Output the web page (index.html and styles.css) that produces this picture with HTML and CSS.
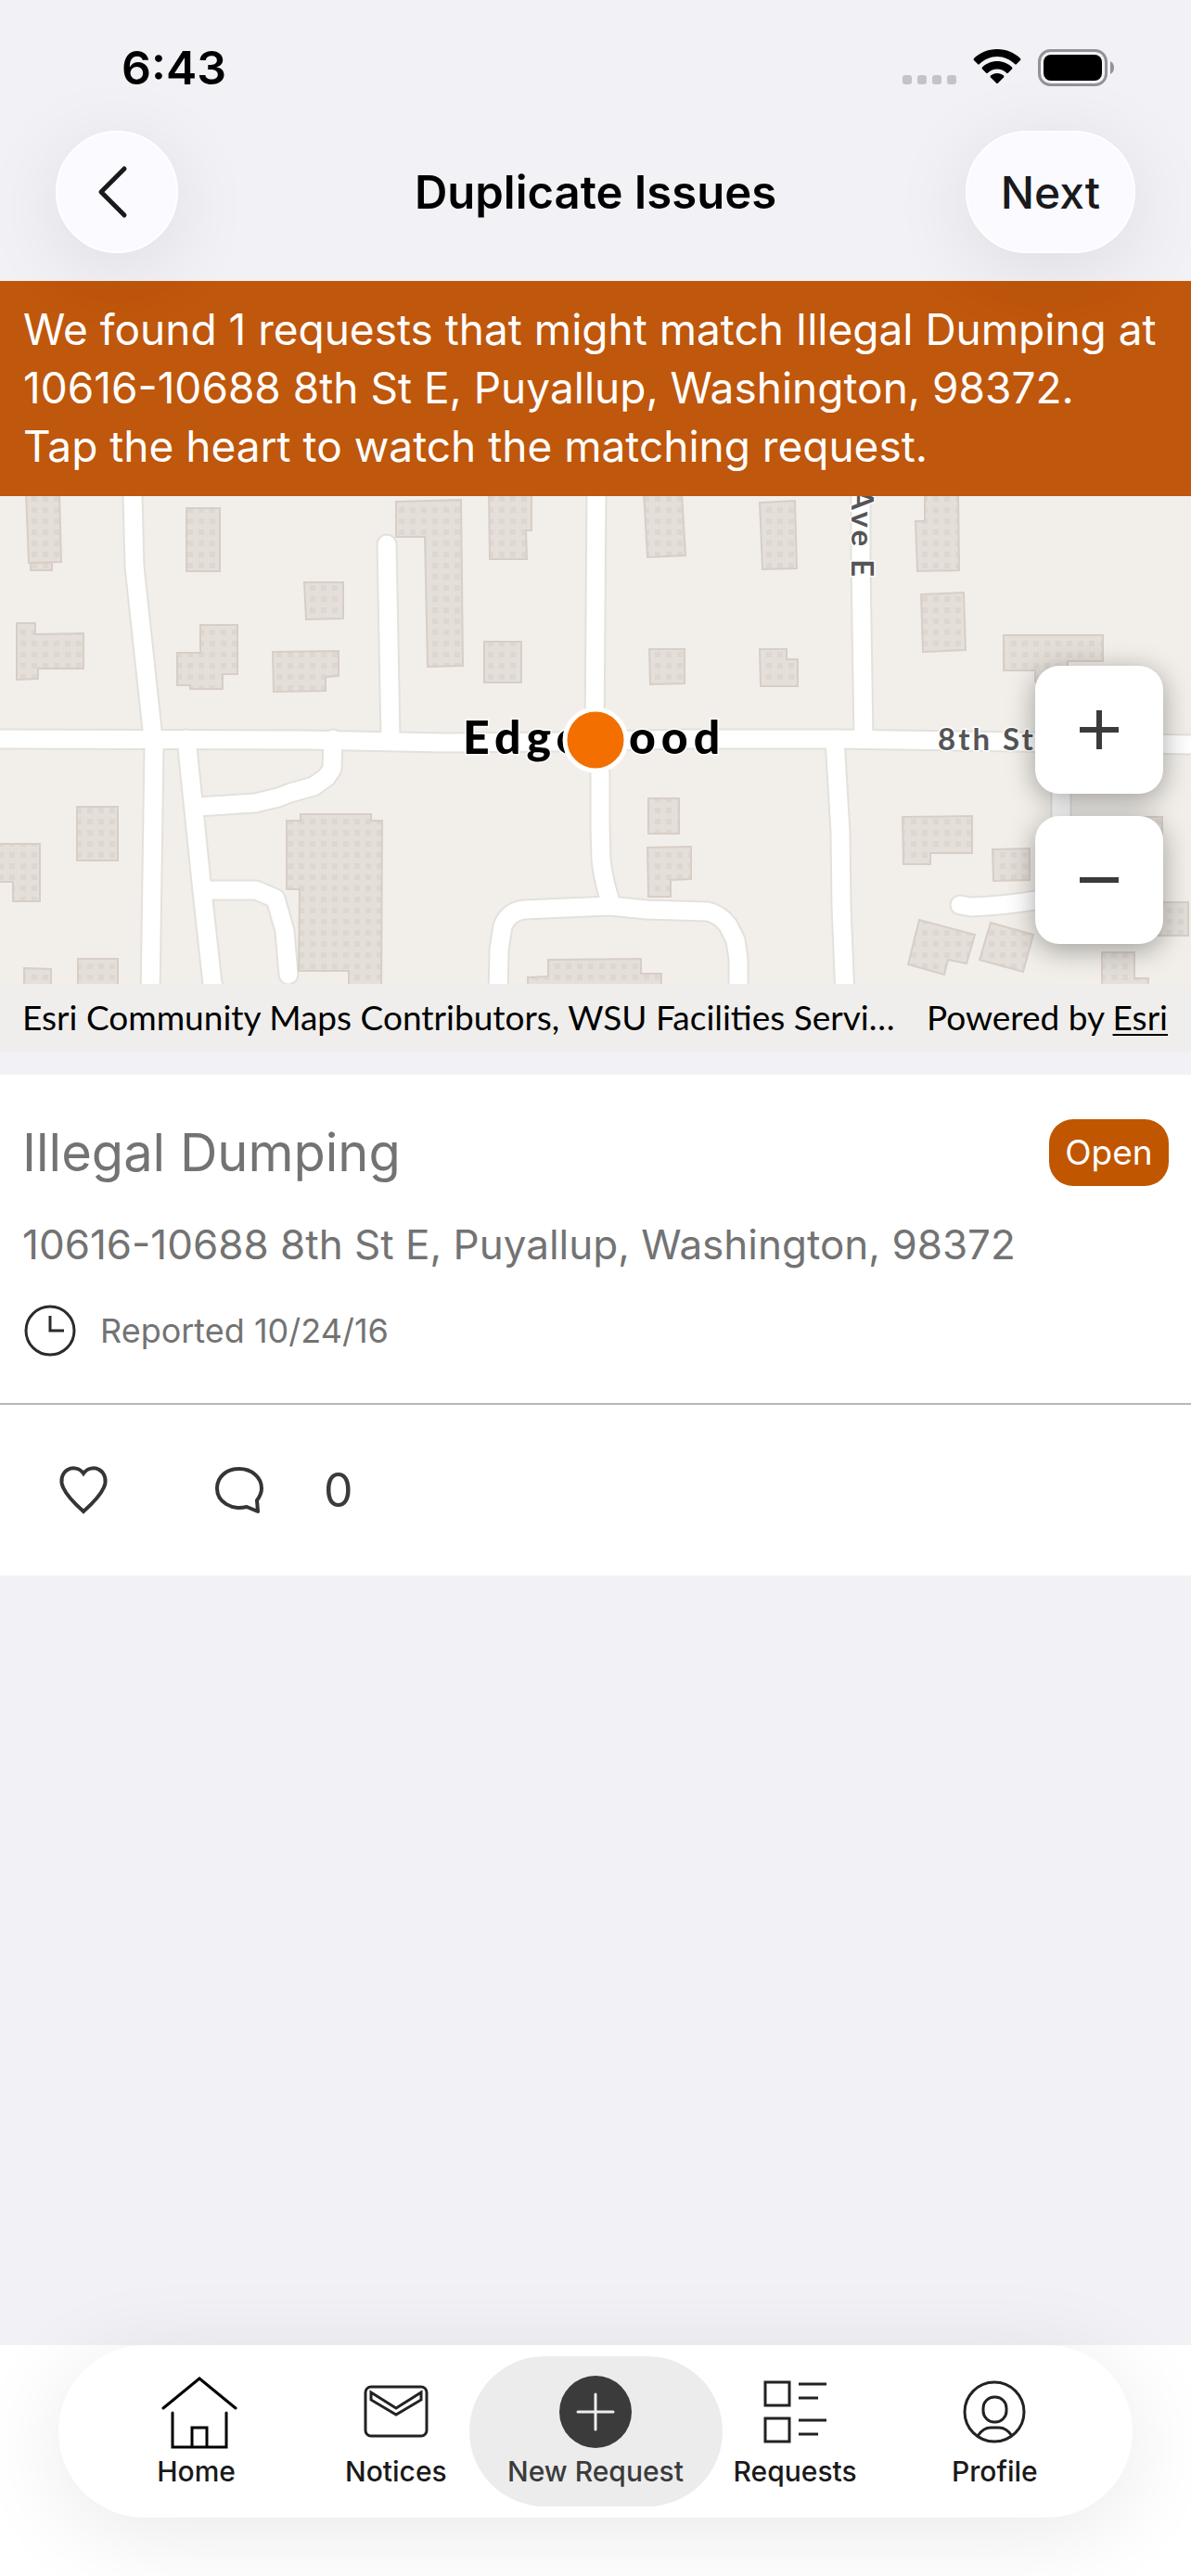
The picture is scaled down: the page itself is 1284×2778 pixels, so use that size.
FILE: index.html
```html
<!DOCTYPE html>
<html lang="en">
<head>
<meta charset="utf-8">
<meta name="viewport" content="width=device-width, initial-scale=1">
<title>Duplicate Issues</title>
<link rel="stylesheet" href="styles.css">
</head>
<body>
<div class="status">
  <span class="status-time">6:43</span>
  <div class="status-icons">
    <svg width="58" height="38" viewBox="0 0 58 38" fill="#c4c3c8" aria-hidden="true">
      <rect x="0" y="28" width="10" height="10" rx="3"/><rect x="16" y="28" width="10" height="10" rx="3"/><rect x="32" y="28" width="10" height="10" rx="3"/><rect x="48" y="28" width="10" height="10" rx="3"/>
    </svg>
    <svg width="52" height="38" viewBox="0 0 52 38" aria-hidden="true">
      <path d="M26 0C36 0 45 4 51 10Q52 11 51 12L47 16Q46 17 45 16C40 11 33 8 26 8S12 11 7 16Q6 17 5 16L1 12Q0 11 1 10C7 4 16 0 26 0Z"/>
      <path d="M26 13C32 13 38 15.500 42 19.500Q43 20.500 42 21.500L38 25.500Q37 26.500 36 25.500C33 23 30 21.500 26 21.500S19 23 16 25.500Q15 26.500 14 25.500L10 21.500Q9 20.500 10 19.500C14 15.500 20 13 26 13Z"/>
      <path d="M26 26C29 26 31 27 33 28.500Q34 29.500 33 30.500L27 36.500Q26 37.500 25 36.500L19 30.500Q18 29.500 19 28.500C21 27 23 26 26 26Z"/>
    </svg>
    <svg width="83" height="40" viewBox="0 0 83 40" aria-hidden="true">
      <rect x="1.500" y="1.500" width="72" height="37" rx="12" fill="none" stroke="#939297" stroke-width="3"/>
      <rect x="6" y="6" width="63" height="28" rx="8"/>
      <path d="M78 13Q82 15 82 20T78 27Z" fill="#939297"/>
    </svg>
  </div>
</div>
<header class="nav">
  <button class="glass back" type="button" aria-label="Back">
    <svg width="34" height="56" viewBox="0 0 34 56" fill="none" stroke="#1a1a1c" stroke-width="5" stroke-linecap="round" stroke-linejoin="round"><path d="M29 3L4 28L29 53"/></svg>
  </button>
  <h1 class="nav-title">Duplicate Issues</h1>
  <button class="glass next" type="button">Next</button>
</header>
<main>
  <p class="banner">We found 1 requests that might match Illegal Dumping at<br>10616-10688 8th St E, Puyallup, Washington, 98372.<br>Tap the heart to watch the matching request.</p>
  <section class="map" aria-label="Map">
    <svg class="map-canvas" viewBox="0 0 1284 526" preserveAspectRatio="xMidYMid slice">
      <defs>
        <pattern id="dots" x="10" y="0" width="12" height="12" patternUnits="userSpaceOnUse">
          <rect width="12" height="12" fill="#e4dfd9"/><rect width="6" height="6" fill="#dcd7d1"/>
        </pattern>
        <g id="roads">
          <path d="M0 262L330 263L430 265L480 266L600 265L740 262L900 262L1030 264L1284 268"/>
          <path d="M143 -10V0L145 76L164 252L166 272L162 540"/>
          <path d="M201 262L209 339L218 426L229 526L238 546"/>
          <path d="M213 335L275 331L300 325L313 320L338 313L352 303L358 294L359 262"/>
          <path d="M220 425H276L297 434L307 469L311 516"/>
          <path d="M417 52L421 262"/>
          <path d="M643 -10L641 262L647 300V355L648 392Q650 412 657 434"/>
          <path d="M537 540L538 489L542 464Q548 448 565 446L657 442L697 446L763 448Q776 451 785 463L793 479L796 499V540"/>
          <path d="M928 -10V74L931 262"/>
          <path d="M900 262L906 363L907 442L911 540"/>
          <path d="M1144 268V434L1116 436Q1080 442 1047 443L1035 441"/>
        </g>
      </defs>
      <rect width="1284" height="526" fill="#f2efea"/>
      <g fill="none" stroke-linecap="round" stroke-linejoin="round">
        <use href="#roads" stroke="#e3e1db" stroke-width="23"/>
        <use href="#roads" stroke="#fff" stroke-width="19"/>
      </g>
      <g fill="url(#dots)" stroke="#d8cec6" stroke-width="2">
        <path d="M28 -4H64L66 71L31 72ZM33 72H56V80H33Z"/>
        <path d="M201 13H237V81H201Z"/>
        <path d="M328 93H370V132L330 133Z"/>
        <path d="M18 137H38V149L90 148V186H41V197L18 198Z"/>
        <path d="M216 139H256V192H240V208H205V204H191V169H216Z"/>
        <path d="M294 168L365 167V194L351 195V210L295 211Z"/>
        <path d="M83 335H127V393H83Z"/>
        <path d="M-4 375H43V437H14V416H-4Z"/>
        <path d="M26 509L55 510V540H26ZM84 499H127V540H84Z"/>
        <path d="M324 343H400V350H412L411 540H376V512H322L323 424H309V350H324Z"/>
        <path d="M427 6L497 4L499 183L461 184L458 44H427Z"/>
        <path d="M527 -4H573V37H567L568 68H528Z"/>
        <path d="M694 -4H735L739 64L698 66Z"/>
        <path d="M819 7L857 5L859 78L822 79Z"/>
        <path d="M522 157H562V201H522Z"/>
        <path d="M700 165H738V202L701 203Z"/>
        <path d="M819 165H848V176H860V205H820Z"/>
        <path d="M699 326H732V364H699Z"/>
        <path d="M698 379L745 378V413L723 414V432H699Z"/>
        <path d="M569 540V519L591 518V500L691 499V515H713V540Z"/>
        <path d="M997 -4H1033L1034 80L989 81L987 27H997Z"/>
        <path d="M993 106L1039 104L1041 166L995 168Z"/>
        <path d="M1082 150H1189V178H1151V200H1116V188H1082Z"/>
        <path d="M973 346L1048 345V385H1003V397H974Z"/>
        <path d="M1070 381L1110 380V414L1071 415Z"/>
        <path d="M991 457L1051 473L1042 504L1022 500L1018 516L979 505Z"/>
        <path d="M1068 460L1114 473L1103 513L1056 500Z"/>
        <path d="M1210 346H1253V370H1210ZM1245 438H1281V474H1245Z"/>
        <path d="M1188 492H1223V520H1238V540H1188Z"/>
      </g>
      <text class="place" x="499" y="278">Edgewood</text>
      <text class="street" x="1011" y="274">8th St E</text>
      <text class="street" text-anchor="end" transform="translate(918 90) rotate(90)">Ave E</text>
      <circle cx="642" cy="263" r="33" fill="#f26f00" stroke="#fff" stroke-width="5"/>
    </svg>
    <div class="zoom">
      <button class="zoom-btn" type="button" aria-label="Zoom in"><svg width="42" height="42" viewBox="0 0 42 42" fill="#3b3b3b"><path d="M0 18H18V0H24V18H42V24H24V42H18V24H0Z"/></svg></button>
      <button class="zoom-btn" type="button" aria-label="Zoom out"><svg width="42" height="42" viewBox="0 0 42 42" fill="#3b3b3b"><path d="M0 18H42V24H0Z"/></svg></button>
    </div>
    <div class="credits"><span>Esri Community Maps Contributors, WSU Facilities Servi…</span><span>Powered by <a href="#esri">Esri</a></span></div>
  </section>
  <article class="card">
    <div class="card-body">
      <div class="card-head"><h2 class="card-title">Illegal Dumping</h2><span class="badge">Open</span></div>
      <p class="address">10616-10688 8th St E, Puyallup, Washington, 98372</p>
      <p class="reported">
        <svg width="56" height="56" viewBox="0 0 56 56" fill="none" stroke="#2b2b2b" stroke-width="3" aria-hidden="true"><circle cx="28" cy="28" r="26"/><path d="M28 12V28H43"/></svg>
        <span>Reported 10/24/16</span>
      </p>
    </div>
    <div class="actions">
      <button class="action" type="button" aria-label="Watch"><svg width="54" height="54" viewBox="0 0 54 54" fill="none" stroke="#353535" stroke-width="4"><path d="M27 9C31 3 39 2 44 5C51 9 52 18 49 24C45 33 36 42 27 50C18 42 9 33 5 24C2 18 3 9 10 5C15 2 23 3 27 9Z"/></svg></button>
      <button class="action" type="button"><svg width="54" height="54" viewBox="0 0 54 54" fill="none" stroke="#353535" stroke-width="4" stroke-linejoin="round" aria-hidden="true"><path d="M46 38L47 50L35 45C19 49 3 40 3 25C3 12 14 4 27 4S51 13 51 25C51 30 49 34 46 38Z"/></svg><span>0</span></button>
    </div>
  </article>
</main>
<footer class="dock">
  <nav class="tabs" aria-label="Main">
    <a class="tab" href="#home"><svg width="82" height="80" viewBox="0 0 82 80" fill="none" stroke="#000" stroke-width="3" stroke-linecap="round" aria-hidden="true"><path d="M5 36L44 4L83 36M15 41V78H73V41M36 78V57H52V78"/></svg><span>Home</span></a>
    <a class="tab" href="#notices"><svg width="82" height="80" viewBox="0 0 82 80" fill="none" stroke="#222" stroke-width="3" aria-hidden="true"><rect x="8" y="13" width="66" height="53" rx="6"/><path d="M14 19L41 36L68 19V27L41 43L14 27Z"/></svg><span>Notices</span></a>
    <a class="tab tab-on" href="#new" aria-current="page"><svg width="82" height="80" viewBox="0 0 82 80" aria-hidden="true"><circle cx="41" cy="40" r="39" fill="#3b3b3b"/><path d="M41 21V59M22 40H60" stroke="#eee" stroke-width="3" stroke-linecap="round"/></svg><span>New Request</span></a>
    <a class="tab" href="#requests"><svg width="82" height="80" viewBox="0 0 82 80" fill="none" stroke="#222" stroke-width="3" aria-hidden="true"><path d="M9 8H35V33H9ZM9 47H35V72H9ZM45 10H75M45 25H66M45 49H75M45 64H66"/></svg><span>Requests</span></a>
    <a class="tab" href="#profile"><svg width="82" height="80" viewBox="0 0 82 80" fill="none" stroke="#222" stroke-width="3" aria-hidden="true"><circle cx="41" cy="40" r="32"/><rect x="29" y="24" width="25" height="27" rx="12"/><path d="M23 66Q29 57 37 57H46Q54 57 60 66"/></svg><span>Profile</span></a>
  </nav>
</footer>
</body>
</html>
```
FILE: styles.css
```css
* { box-sizing: border-box; }

body {
  margin: 0;
  min-height: 100vh;
  display: flex;
  flex-direction: column;
  background: #f2f1f6;
  color: #000;
  font-family: Inter, "Liberation Sans", sans-serif;
}

h1, h2, p { margin: 0; font-weight: 400; }
button { border: 0; padding: 0; background: none; color: inherit; font: inherit; }
svg { display: block; flex: none; overflow: visible; }

.status {
  height: 141px;
  padding: 0 82px 0 131px;
  display: flex;
  justify-content: space-between;
}
.status-time { padding-top: 43px; font-size: 50px; line-height: 60px; font-weight: 600; }
.status-icons { display: flex; align-items: flex-start; gap: 18px; padding-top: 53px; }

.nav {
  position: relative;
  z-index: 1;
  display: grid;
  grid-template-columns: 1fr auto 1fr;
  align-items: center;
  height: 162px;
  padding: 0 60px 30px;
}
.nav-title { padding-top: 2px; font-size: 49px; line-height: 60px; font-weight: 600; }
.glass {
  height: 132px;
  border: 2px solid #fff;
  border-radius: 66px;
  background: #fafaff;
  box-shadow: 0 16px 90px rgba(0, 0, 0, 0.09);
  color: #1a1a1c;
}
.back { width: 132px; display: grid; place-items: center; padding-right: 8px; }
.next { justify-self: end; width: 183px; font-size: 48px; font-weight: 500; }

.banner {
  padding: 21px 25px 22px;
  background: #bf570c;
  color: #fff;
  font-size: 46px;
  line-height: 63px;
  white-space: nowrap;
}

.map { position: relative; margin-bottom: 24px; background: #f2efea; }
.map-canvas { width: 100%; height: 526px; overflow: hidden; }
.place, .street {
  font-family: Lato, "Open Sans", sans-serif;
  font-weight: 700;
  paint-order: stroke;
  stroke: #fff;
  stroke-width: 3px;
}
.place { font-size: 50px; font-weight: 900; letter-spacing: 6px; }
.street { font-size: 33px; letter-spacing: 3px; fill: #555; }
.zoom { position: absolute; top: 183px; right: 30px; display: grid; gap: 24px; }
.zoom-btn {
  width: 138px;
  height: 138px;
  display: grid;
  place-items: center;
  border-radius: 26px;
  background: #fff;
  box-shadow: 0 6px 30px rgba(0, 0, 0, 0.35);
}
.credits {
  position: relative;
  display: flex;
  justify-content: space-between;
  padding: 0 25px 2px 24px;
  background: #efeeec;
  font-family: Lato, "Open Sans", sans-serif;
  font-size: 37px;
  line-height: 72px;
  white-space: nowrap;
}
.credits a { color: inherit; text-underline-offset: 4px; text-decoration-thickness: 2px; }

.card { background: #fff; color: #737373; }
.card-body { padding: 48px 24px 50px; border-bottom: 2px solid #b8b8b8; }
.card-head { display: flex; align-items: center; justify-content: space-between; }
.card-title { font-size: 56px; line-height: 72px; }
.badge {
  width: 129px;
  border-radius: 26px;
  background: #c05600;
  color: #fff;
  font-size: 37px;
  line-height: 72px;
  text-align: center;
}
.address { margin-top: 33px; font-size: 44px; line-height: 60px; white-space: nowrap; }
.reported { display: flex; align-items: center; gap: 26px; margin-top: 35px; padding-left: 2px; font-size: 36px; line-height: 56px; }
.actions { display: flex; align-items: center; gap: 114px; height: 184px; padding-left: 63px; }
.action { display: flex; align-items: center; gap: 64px; color: #3b3b3b; font-size: 50px; line-height: 60px; }

.dock { margin-top: auto; padding: 0 63px 63px; background: #fff; }
.tabs {
  display: flex;
  height: 186px;
  padding: 12px 41px;
  border-radius: 93px;
  background: #fff;
  box-shadow: 0 16px 100px rgba(0, 0, 0, 0.09);
}
.tab {
  flex: 1 1 0;
  display: flex;
  flex-direction: column;
  align-items: center;
  padding-top: 20px;
  color: #1a1a1a;
  font-size: 30px;
  line-height: 36px;
  font-weight: 500;
  text-decoration: none;
  white-space: nowrap;
}
.tab span { padding-top: 6px; }
.tab-on { margin: 0 -29px; flex: 0 0 273px; border-radius: 81px; background: #ececec; color: #3b3b3b; }
```
